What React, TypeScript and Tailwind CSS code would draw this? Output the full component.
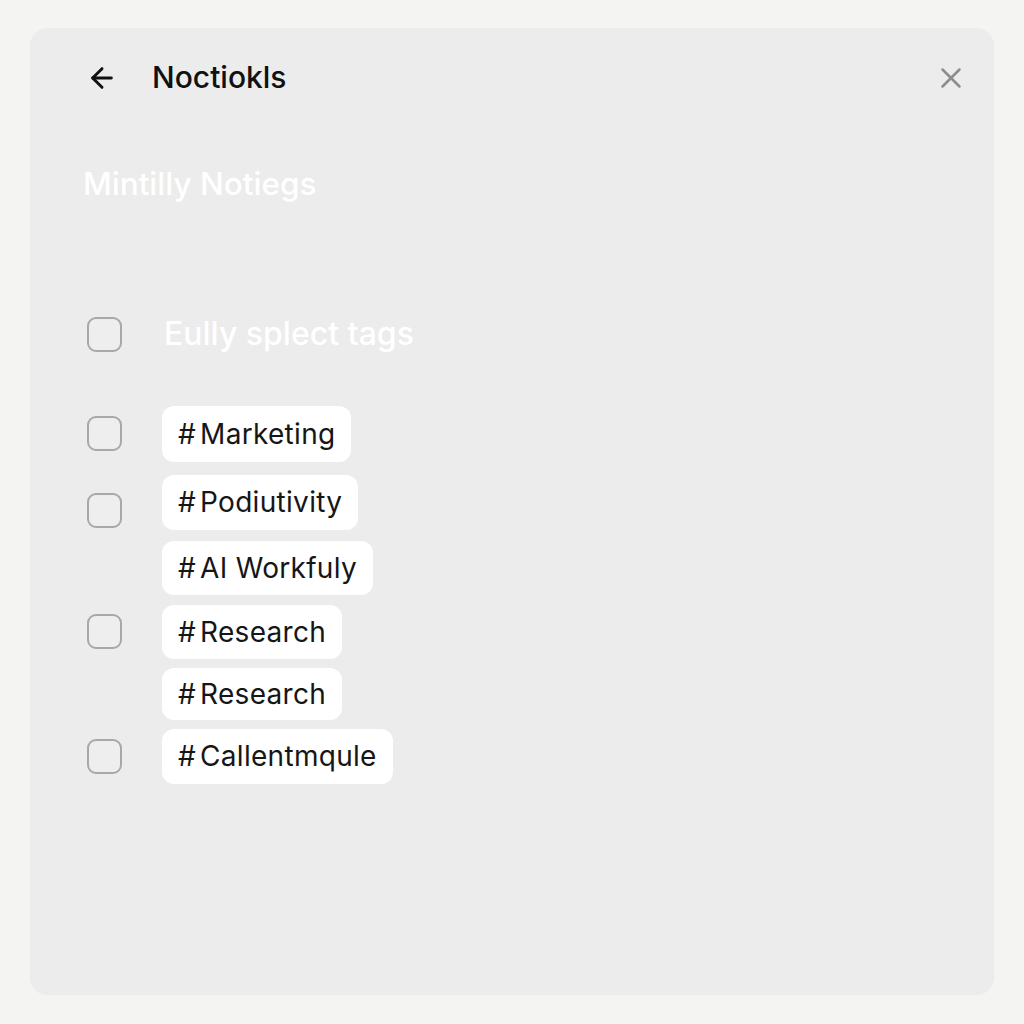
import { ArrowLeft, X } from "lucide-react";

type Row = { tag: string; box: boolean; h: string; mt: string; boxOffset?: string };

const rows: Row[] = [
  { tag: "Marketing", box: true, h: "h-[56px]", mt: "mt-0" },
  { tag: "Podiutivity", box: true, h: "h-[55px]", mt: "mt-[13px]", boxOffset: "mt-[18px]" },
  { tag: "AI Workfuly", box: false, h: "h-[54px]", mt: "mt-[11px]" },
  { tag: "Research", box: true, h: "h-[54px]", mt: "mt-[10px]" },
  { tag: "Research", box: false, h: "h-[52px]", mt: "mt-[9px]" },
  { tag: "Callentmqule", box: true, h: "h-[55px]", mt: "mt-[9px]" },
];

function Checkbox({ className = "" }: { className?: string }) {
  return (
    <div
      className={`w-[35px] h-[35px] rounded-[9px] border-2 border-[#a8a8a8] bg-[#eeeeee] ${className}`}
    />
  );
}

export default function App() {
  return (
    <main
      className="min-h-screen bg-[#f4f4f3] p-[30px] pt-[28px]"
      style={{ fontFamily: "Inter, 'Noto Sans', sans-serif" }}
    >
      <div className="h-[966px] w-[964px] rounded-[18px] bg-[#ececec] shadow-[0_1px_2px_rgba(0,0,0,0.04)]">
        <div className="flex items-center justify-between pl-[56px] pr-[26px] pt-[27px]">
          <div className="flex items-center">
            <ArrowLeft className="w-[32px] h-[32px] text-[#111]" strokeWidth={2.2} />
            <h1 className="ml-[34px] text-[30px] font-medium text-[#111]">Noctiokls</h1>
          </div>
          <X className="w-[34px] h-[34px] text-[#8d8d8d]" strokeWidth={1.8} />
        </div>

        <h2 className="ml-[53px] mt-[68px] text-[31.5px] font-medium text-white leading-none">
          Mintilly Notiegs
        </h2>

        <div className="ml-[57px] mt-[117px] flex items-center">
          <Checkbox />
          <span className="ml-[42px] text-[32px] font-medium text-white leading-none">
            Eully splect tags
          </span>
        </div>

        <div className="ml-[57px] mt-[54px] flex flex-col">
          {rows.map((r, i) => (
            <div key={i} className={`flex ${r.mt}`}>
              <div className={`w-[75px] flex ${r.boxOffset ? "items-start" : "items-center"}`}>
                {r.box && <Checkbox className={r.boxOffset ?? ""} />}
              </div>
              <div
                className={`${r.h} flex items-center rounded-[12px] bg-white px-[16px] text-[28px] tracking-[0.3px] text-[#161616] leading-none`}
              >
                <span className="mr-[4px]">#</span>
                {r.tag}
              </div>
            </div>
          ))}
        </div>
      </div>
    </main>
  );
}
